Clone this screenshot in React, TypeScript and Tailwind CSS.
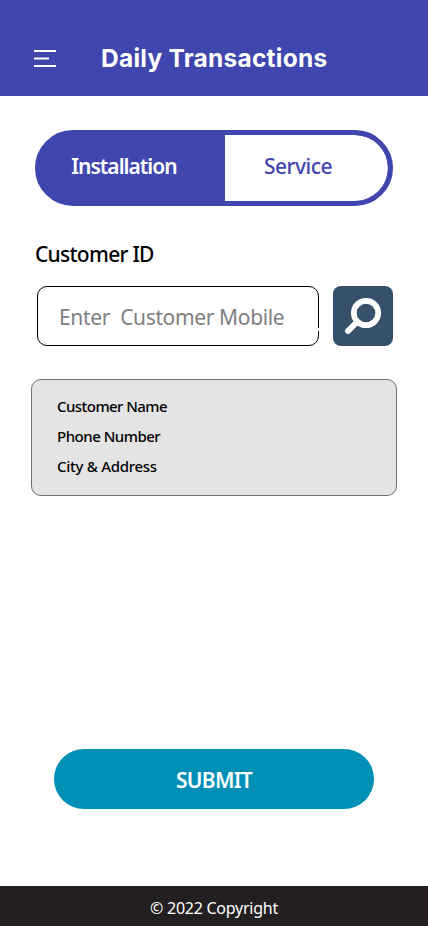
import { useState } from 'react';

const TABS = ['Installation', 'Service'] as const;
const details = [
  { label: 'Customer Name', style: 'tracking-[-0.55px]' },
  { label: 'Phone Number', style: 'tracking-[-0.5px]' },
  { label: 'City & Address', style: 'tracking-[-0.28px]' },
];

export default function App() {
  const [tab, setTab] = useState<string>('Installation');
  const [customer, setCustomer] = useState('');

  return (
    <div className="flex h-[926px] w-[428px] flex-col bg-white font-['Noto_Sans',sans-serif] text-black">
      {/* Header */}
      <header className="flex h-24 shrink-0 items-center bg-[#4046ae] pt-5 pl-[34px]">
        <button aria-label="Menu" className="w-[22px]">
          <svg width="22" height="18" viewBox="0 0 22 18" fill="none" stroke="#fff" strokeWidth="2" className="block">
            <path d="M0 2h22M0 9.5h15M0 17h22" />
          </svg>
        </button>
        <h1 className="ml-[45px] font-['Inter',sans-serif] text-[24.5px] font-bold tracking-[0.24px] whitespace-nowrap text-white">Daily Transactions</h1>
      </header>

      <main className="flex flex-1 flex-col">
        {/* Tabs */}
        <div className="mt-[34px] ml-[35px] flex h-[76px] w-[358px] overflow-hidden rounded-full border-[5px] border-[#4046ae] bg-[#4046ae]">
          {TABS.map((t, i) => (
            <button
              key={t}
              onClick={() => setTab(t)}
              className={`pb-[3px] text-[21px] ${i === 0 ? 'w-[185px] pr-[19px] pl-0.5 tracking-[-1px]' : 'w-[163px] rounded-r-full pr-[17px] tracking-[-0.5px]'} ${tab === t ? 'bg-[#4046ae] font-semibold text-white' : 'bg-white font-medium text-[#4046ae]'}`}
            >
              {t}
            </button>
          ))}
        </div>

        {/* Customer search */}
        <label htmlFor="customer" className="mt-[34px] ml-[35px] h-7 text-[21px] leading-7 font-medium tracking-[-0.72px]">Customer ID</label>
        <div className="mt-[18px] ml-[37px] flex gap-[14px]">
          <div className="relative h-[60px] w-[282px]">
            <input
              id="customer"
              value={customer}
              onChange={e => setCustomer(e.target.value)}
              placeholder="Enter  Customer Mobile"
              className="h-full w-full rounded-[10px] border border-black pt-px pl-[21px] text-[21px] tracking-[-0.36px] outline-none placeholder:whitespace-pre placeholder:text-[#808080]"
            />
            <span className="absolute top-[42px] -right-px h-[3px] w-[3px] bg-white" />
          </div>
          <button aria-label="Search" className="h-[60px] w-[60px] rounded-[8px] bg-[#37506c]">
            <svg width="60" height="60" viewBox="0 0 60 60" fill="none" stroke="#fff" strokeLinecap="round">
              <circle cx="33" cy="27" r="12.2" strokeWidth="5.7" />
              <path d="M23.5 36.5L15 45" strokeWidth="6" />
            </svg>
          </button>
        </div>

        {/* Customer details */}
        <div className="mt-[33px] ml-[31px] h-[117px] w-[366px] rounded-[10px] border border-[#707070] bg-[#e4e4e4] pt-[11px] pl-[25px]">
          {details.map(d => (
            <p key={d.label} className={`h-[30px] text-[15px] leading-[30px] font-medium ${d.style}`}>{d.label}</p>
          ))}
        </div>

        <button className="mt-[253px] ml-[54px] h-[60px] w-80 rounded-full bg-[#0090b7] pt-[3px] text-[21px] font-semibold tracking-[-0.7px] text-white">SUBMIT</button>
      </main>

      <footer className="flex h-10 shrink-0 items-center justify-center bg-[#231f20] pt-[3px] text-base tracking-[-0.25px] text-white">© 2022 Copyright</footer>
    </div>
  );
}
